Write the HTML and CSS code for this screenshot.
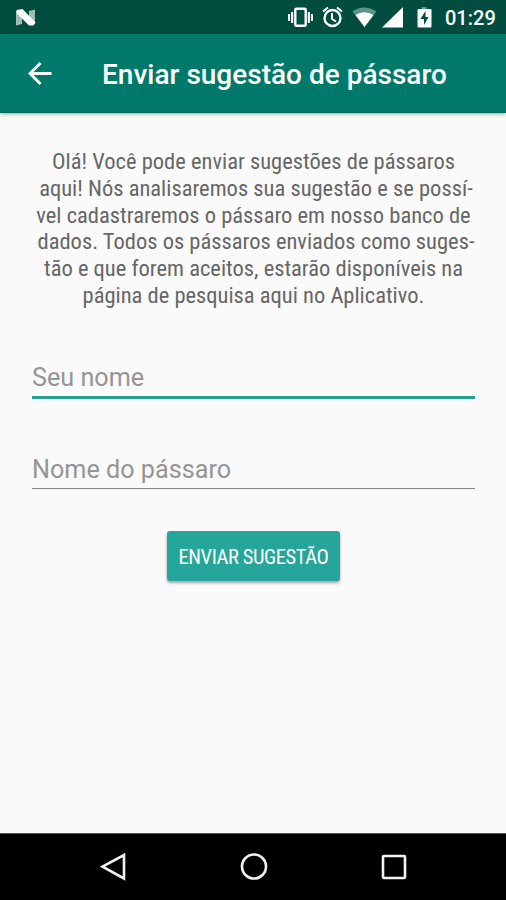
FILE: index.html
```html
<!DOCTYPE html>
<html lang="pt-BR">
<head>
    <meta charset="UTF-8">
    <meta name="viewport" content="width=device-width, initial-scale=1.0">
    <title>Enviar sugestão de pássaro</title>
    <link rel="stylesheet" href="styles.css">
</head>
<body>
    <!-- Status bar -->
    <div class="status-bar">
        <svg class="n-logo" width="22" height="18" viewBox="0 0 22 18">
            <path d="M1 2l6 4v9l-6 1.500zM14 2l6-1.500v14l-6-4z" fill="#9dbdb5"/>
            <path d="M1.500 1L7.500 0 20.500 13.500 18.500 16.500H14L1.500 4z" fill="#fff"/>
        </svg>
        <svg class="status-icons" width="150" height="34" viewBox="0 0 150 34" fill="#fff">
            <!-- vibrate -->
            <path d="M7 12h2.200v11H7zM4 14h2v7H4zM23.800 12H26v11h-2.200zM27 14h2v7h-2z"/>
            <rect x="11.300" y="8.700" width="10.400" height="17" rx="1" fill="none" stroke="#fff" stroke-width="2.400"/>
            <!-- alarm -->
            <circle cx="48.500" cy="18" r="8" fill="none" stroke="#fff" stroke-width="2.300"/>
            <path d="M48 13v6l4 2.500M39 11.500l5-4M58 11.500l-5-4" fill="none" stroke="#fff" stroke-width="2"/>
            <!-- wifi -->
            <path d="M68.500 11.500Q80 3.500 92.500 11.500L80.500 27z" fill="#5f9488"/>
            <path d="M71.500 15Q80.500 9.500 89.500 15L80.500 27z"/>
            <!-- signal -->
            <path d="M98 27.500L119 7v20.500z"/>
            <!-- battery -->
            <path d="M137.500 7h5v2h-5z" fill="#5f9488"/>
            <rect x="133.500" y="9" width="14" height="18.500" rx="1"/>
            <path d="M141.500 11l-5 8h3.500v6l4.500-8h-3z" fill="#004d40"/>
        </svg>
        <span class="clock">01:29</span>
    </div>

    <!-- Toolbar -->
    <header class="toolbar">
        <svg class="back" width="24" height="24" viewBox="0 0 24 24" fill="none" stroke="#fff" stroke-width="2.800">
            <path d="M23.500 12.500H2.500M12.500 2L2 12.500 12.500 23"/>
        </svg>
        <h1>Enviar sugestão de pássaro</h1>
    </header>

    <main class="content">
        <p class="intro">
            Olá! Você pode enviar sugestões de pássaros<br>
            <span class="hyphenated">aqui! Nós analisaremos sua sugestão e se possí-</span><br>
            vel cadastraremos o pássaro em nosso banco de<br>
            <span class="hyphenated">dados. Todos os pássaros enviados como suges-</span><br>
            tão e que forem aceitos, estarão disponíveis na<br>
            página de pesquisa aqui no Aplicativo.
        </p>
        <form class="form">
            <input class="field field-active" type="text" placeholder="Seu nome">
            <input class="field" type="text" placeholder="Nome do pássaro">
            <button class="send" type="button">ENVIAR SUGESTÃO</button>
        </form>
    </main>

    <!-- Navigation bar -->
    <nav class="nav-bar">
        <svg width="28" height="28" viewBox="0 0 28 28"><path d="M24 2v23.500L2.500 13.700z"/></svg>
        <svg width="28" height="28" viewBox="0 0 28 28"><circle cx="14" cy="13.500" r="12"/></svg>
        <svg width="28" height="28" viewBox="0 0 28 28"><rect x="3" y="3" width="22" height="22" rx="1"/></svg>
    </nav>
</body>
</html>
```
FILE: styles.css
```css
* {
    box-sizing: border-box;
}
body {
    margin: 0;
    height: 900px;
    display: flex;
    flex-direction: column;
    overflow: hidden;
    background-color: #fafafa;
    font-family: Roboto, sans-serif;
}
.status-bar {
    display: flex;
    align-items: center;
    height: 34px;
    padding: 0 11px 0 15px;
    background-color: #004d40;
}
.n-logo {
    margin-top: 1px;
}
.status-icons {
    margin-left: auto;
}
.clock {
    width: 50px;
    margin-left: 11px;
    margin-top: 2px;
    color: #fff;
    font-size: 20px;
    font-weight: 500;
    line-height: 34px;
    white-space: nowrap;
}
.toolbar {
    display: flex;
    align-items: center;
    height: 79px;
    padding-left: 28px;
    background-color: #00796b;
    border-bottom: 1px solid #00695c;
    box-shadow: 0 1px 4px rgba(0, 0, 0, 0.35);
}
.toolbar h1 {
    margin: 2px 0 0 50px;
    color: #fff;
    font-size: 28px;
    font-weight: 500;
    white-space: nowrap;
}
.content {
    flex: 1;
    padding: 35px 31px 0 32px;
}
.intro {
    margin: 0 -20px;
    color: #666;
    font-family: "Roboto Condensed", Roboto, sans-serif;
    font-stretch: 75%;
    font-size: 22.5px;
    line-height: 26.8px;
    text-align: center;
    white-space: nowrap;
}
.hyphenated {
    padding-left: 5px;
}
.form {
    display: flex;
    flex-direction: column;
    align-items: center;
    margin-top: 46px;
}
.field {
    width: 100%;
    height: 44px;
    margin-bottom: 42px;
    padding: 6px 0 0;
    border: 0;
    border-bottom: 1px solid #858585;
    border-radius: 0;
    outline: none;
    background: none;
    font-family: Roboto, sans-serif;
    font-size: 25.2px;
}
.field::placeholder {
    color: #959595;
    opacity: 1;
}
.field-active {
    margin-bottom: 46px;
    padding-top: 4px;
    border-bottom: 3px solid #26a08c;
}
.send {
    width: 173px;
    height: 50px;
    padding: 2px 0 0;
    border: 0;
    border-radius: 3px;
    background-color: #26a69a;
    box-shadow: 0 2px 3px rgba(0, 0, 0, 0.35);
    color: #fff;
    font-family: "Roboto Condensed", Roboto, sans-serif;
    font-stretch: 75%;
    font-size: 20.5px;
    font-weight: 450;
    letter-spacing: -0.4px;
    white-space: nowrap;
}
.nav-bar {
    display: flex;
    align-items: center;
    justify-content: space-between;
    height: 67px;
    padding: 0 98px 0 100px;
    background-color: #000;
    border-top: 1px solid #555;
}
.nav-bar svg {
    fill: none;
    stroke: #f2f2f2;
    stroke-width: 2.6;
}
```
